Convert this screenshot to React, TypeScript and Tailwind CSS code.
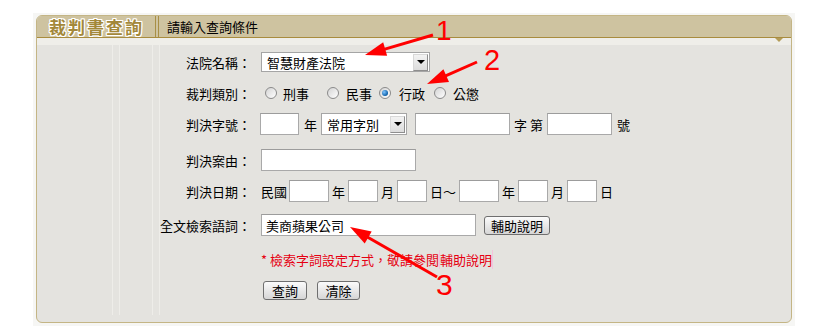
import React from "react";

type ArrowProps = { x1: number; y1: number; x2: number; y2: number };

// red annotation arrow, head at (x2, y2)
function Arrow({ x1, y1, x2, y2 }: ArrowProps) {
  const dx = x2 - x1;
  const dy = y2 - y1;
  const len = Math.hypot(dx, dy);
  const ux = dx / len;
  const uy = dy / len;
  const hl = 21;
  const hw = 7;
  const bx = x2 - ux * hl;
  const by = y2 - uy * hl;
  const pts = `${x2},${y2} ${bx - uy * hw},${by + ux * hw} ${bx + uy * hw},${by - ux * hw}`;
  return (
    <g>
      <line x1={x1} y1={y1} x2={bx + ux * 2} y2={by + uy * 2} stroke="#ff0000" strokeWidth={3} />
      <polygon points={pts} fill="#ff0000" />
    </g>
  );
}

function Input({ w, h = "h-[22px]", value }: { w: string; h?: string; value?: string }) {
  return (
    <div className={`${w} ${h} shrink-0 bg-white border border-[#a9a9a9] border-t-[#9c9c9c] flex items-center pl-[4px] text-[13px] leading-none`}>
      {value}
    </div>
  );
}

function Select({ w, h, value }: { w: string; h: string; value: string }) {
  return (
    <div className={`${w} ${h} shrink-0 bg-white border border-[#a5a5a5] flex items-center justify-between pl-[5px] pr-px text-[13px] leading-none`}>
      <span>{value}</span>
      <div className="w-[15px] h-[17px] border border-[#8e8e8e] border-t-[#d8d8d8] border-l-[#d8d8d8] bg-linear-to-b from-[#f3f3f3] to-[#dcdcdc] flex items-center justify-center">
        <div className="w-0 h-0 border-l-[4px] border-r-[4px] border-t-[4px] border-l-transparent border-r-transparent border-t-black" />
      </div>
    </div>
  );
}

function Radio({ checked = false, ml }: { checked?: boolean; ml: string }) {
  return (
    <div className={`${ml} w-[12px] h-[12px] shrink-0 rounded-full border border-[#8a8a8a] bg-linear-to-br from-[#d4d4d4] to-[#ffffff] flex items-center justify-center`}>
      {checked && <div className="w-[6px] h-[6px] rounded-full bg-[radial-gradient(circle_at_35%_35%,#7fc4ff,#0b5fa8_70%,#08335c)]" />}
    </div>
  );
}

function Btn({ w, label }: { w: string; label: string }) {
  return (
    <div className={`${w} h-[19px] shrink-0 rounded-[3px] border border-[#6f6f6f] bg-linear-to-b from-[#fbfbfb] to-[#d6d6d6] flex items-center justify-center text-[13px] leading-none`}>
      {label}
    </div>
  );
}

function Row({ label, h, children }: { label?: string; h: string; children?: React.ReactNode }) {
  return (
    <div className={`${h} flex items-center`}>
      <div className="w-[91px] shrink-0 text-right text-[13px] leading-none">{label}</div>
      <div className="ml-[10px] flex items-center text-[13px] leading-none">{children}</div>
    </div>
  );
}

export default function App() {
  return (
    <div className="relative w-[823px] h-[335px] bg-white overflow-hidden font-['Noto_Sans_CJK_TC','Liberation_Sans',sans-serif] text-black">
      <div className="ml-[33px] mt-[13px] w-[762px] h-[313px] bg-[#f6f6f4] pl-[3px] pt-[2px]">
        {/* PANEL */}
        <div className="relative w-[756px] h-[308px] rounded-[6px] border border-[#c4b585] bg-[#e4e3df] overflow-hidden flex flex-col">
          {/* HEADER */}
          <div className="h-[21px] bg-[#cec3a0] flex items-center">
            <div className="w-[118px] pl-[12px] text-[17px] leading-none tracking-[2px] text-[#a3883a] font-bold [text-shadow:1px_0_#fff,-1px_0_#fff,0_1px_#fff,0_-1px_#fff,1px_1px_#fff,-1px_-1px_#fff,1px_-1px_#fff,-1px_1px_#fff]">
              裁判書查詢
            </div>
            <div className="w-px h-full bg-[#a88f45]" />
            <div className="w-[2px]" />
            <div className="w-px h-full bg-[#a88f45]" />
            <div className="ml-[8px] text-[13px] leading-none">請輸入查詢條件</div>
          </div>
          <div className="h-px bg-[#a98c3e]" />
          <div className="h-[7px] bg-[#efeee9]" />

          {/* CONTENT */}
          <div className="flex-1 flex pb-[7px]">
            <div className="w-[75px]" />
            <div className="w-px bg-[#eeede9]" />
            <div className="w-[6px]" />
            <div className="w-px bg-[#eeede9]" />
            <div className="w-[32px]" />
            <div className="w-px bg-[#eeede9]" />
            <div className="w-[6px]" />
            <div className="w-px bg-[#eeede9]" />

            <div className="flex flex-col">
              <Row label="法院名稱：" h="h-[34px]">
                <Select w="w-[169px]" h="h-[20px]" value="智慧財產法院" />
              </Row>

              <Row label="裁判類別：" h="h-[28px]">
                <Radio ml="ml-[4px]" />
                <span className="ml-[6px]">刑事</span>
                <Radio ml="ml-[18px]" />
                <span className="ml-[7px]">民事</span>
                <Radio ml="ml-[7px]" checked />
                <span className="ml-[8px]">行政</span>
                <Radio ml="ml-[9px]" />
                <span className="ml-[7px]">公懲</span>
              </Row>

              <Row label="判決字號：" h="h-[34px]">
                <div className="-ml-px flex items-center">
                  <Input w="w-[39px]" />
                  <span className="ml-[5px]">年</span>
                  <div className="ml-[4px]">
                    <Select w="w-[86px]" h="h-[22px]" value="常用字別" />
                  </div>
                  <div className="ml-[8px]">
                    <Input w="w-[95px]" />
                  </div>
                  <span className="ml-[4px]">字 第</span>
                  <div className="ml-[4px]">
                    <Input w="w-[65px]" />
                  </div>
                  <span className="ml-[5px]">號</span>
                </div>
              </Row>

              <Row label="判決案由：" h="h-[38px]">
                <Input w="w-[155px]" />
              </Row>

              <Row label="判決日期：" h="h-[24px]">
                <span>民國</span>
                <div className="ml-[2px]"><Input w="w-[40px]" /></div>
                <span className="ml-[3px]">年</span>
                <div className="ml-[3px]"><Input w="w-[30px]" /></div>
                <span className="ml-[3px]">月</span>
                <div className="ml-[3px]"><Input w="w-[30px]" /></div>
                <span className="ml-[3px]">日～</span>
                <div className="ml-[3px]"><Input w="w-[40px]" /></div>
                <span className="ml-[3px]">年</span>
                <div className="ml-[3px]"><Input w="w-[30px]" /></div>
                <span className="ml-[3px]">月</span>
                <div className="ml-[3px]"><Input w="w-[30px]" /></div>
                <span className="ml-[3px]">日</span>
              </Row>

              <Row label="全文檢索語詞：" h="h-[44px]">
                <Input w="w-[215px]" value="美商蘋果公司" />
                <div className="ml-[8px]">
                  <Btn w="w-[66px]" label="輔助說明" />
                </div>
              </Row>

              <Row h="h-[24px]">
                <span className="text-[#e60012]">
                  * 檢索字詞設定方式，敬請參閱
                  <span className="border-x border-[#f3c4dc]">輔助說明</span>
                </span>
              </Row>

              <Row h="h-[38px]">
                <div className="ml-[2px]"><Btn w="w-[44px]" label="查詢" /></div>
                <div className="ml-[10px]"><Btn w="w-[43px]" label="清除" /></div>
              </Row>
            </div>
          </div>

          {/* header notch */}
          <div className="absolute left-[738px] top-[22px] w-0 h-0 border-l-[4px] border-r-[4px] border-t-[4px] border-l-transparent border-r-transparent border-t-[#b49c58]" />
        </div>
      </div>

      {/* ANNOTATIONS */}
      <svg className="absolute left-0 top-0 pointer-events-none" width={823} height={335}>
        <Arrow x1={433} y1={35} x2={365} y2={55} />
        <Arrow x1={477} y1={62} x2={427} y2={84} />
        <Arrow x1={437} y1={277} x2={350} y2={227} />
        <text x={436} y={40} fontSize={28} fill="#ff0000" fontFamily="Liberation Sans, Arial, sans-serif">1</text>
        <text x={484} y={70} fontSize={29} fill="#ff0000" fontFamily="Liberation Sans, Arial, sans-serif">2</text>
        <text x={436} y={295} fontSize={30} fill="#ff0000" fontFamily="Liberation Sans, Arial, sans-serif">3</text>
      </svg>
    </div>
  );
}
